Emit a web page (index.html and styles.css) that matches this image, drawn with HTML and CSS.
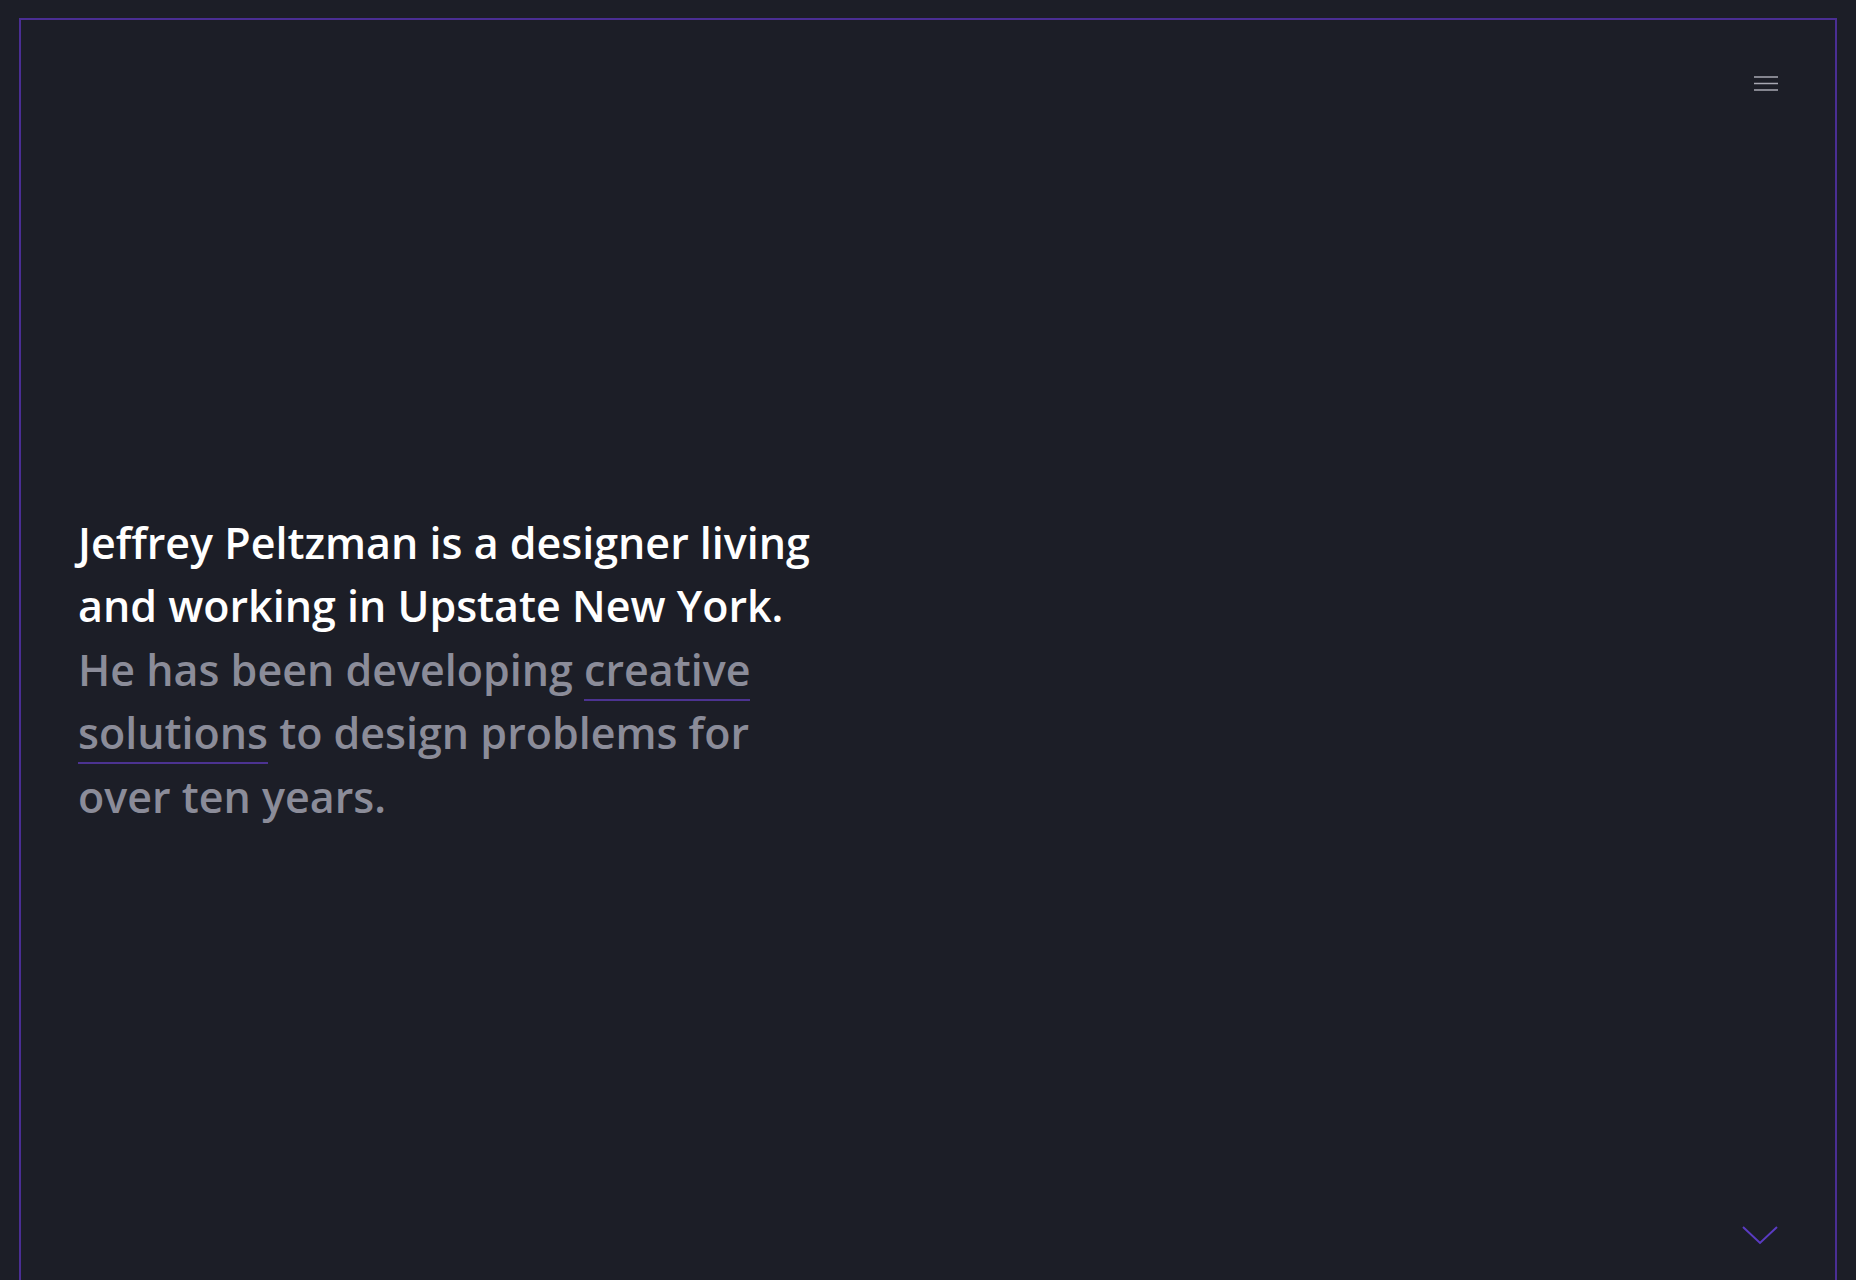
FILE: index.html
```html
<!DOCTYPE html>
<html lang="en">
<head>
  <meta charset="UTF-8">
  <meta name="viewport" content="width=device-width, initial-scale=1.0">
  <title>Jeffrey Peltzman</title>
  <link rel="stylesheet" href="styles.css">
</head>
<body>
  <div class="frame">
    <section class="hero">
      <header class="hero-top">
        <button class="menu-btn" aria-label="Menu">
          <svg width="24" height="15" viewBox="0 0 24 15">
            <path d="M0 1h24M0 7.5h24M0 14h24" stroke="#a7a8b2" stroke-width="1.5" fill="none"/>
          </svg>
        </button>
      </header>

      <div class="intro">
        <p class="lead">Jeffrey Peltzman is a designer living and working in Upstate New York.</p>
        <p class="rest">He has been developing <a href="#work">creative solutions</a> to design problems for over ten years.</p>
      </div>

      <footer class="hero-bottom">
        <a class="scroll-down" href="#work" aria-label="Scroll down">
          <svg width="36" height="19" viewBox="0 0 36 19">
            <path d="M1 1l17 16L35 1" stroke="#5a3bc2" stroke-width="2" fill="none"/>
          </svg>
        </a>
      </footer>
    </section>

    <section class="work" id="work"></section>
  </div>
</body>
</html>
```

FILE: styles.css
```css
*{
  margin: 0;
  padding: 0;
  box-sizing: border-box;
}

body{
  background-color: #1c1e27;
  font-family: "Open Sans", Lato, sans-serif;
}

.frame{
  margin: 18px 19px 0;
  border: 2px solid #4a2e93;
}

.hero{
  height: 1260px;
  padding: 56px 57px 35px;
  display: grid;
  grid-template-rows: auto 1fr auto;
}

.hero-top,
.hero-bottom{
  display: flex;
  justify-content: flex-end;
}

.menu-btn{
  background: none;
  border: none;
  cursor: pointer;
  display: block;
  line-height: 0;
}

.intro{
  align-self: center;
  margin-top: 22px;
  max-width: 750px;
  font-size: 43px;
  font-weight: 600;
  line-height: 63.5px;
}

.lead{
  color: #fff;
}

.rest{
  color: #8b8c99;
}

.rest a{
  color: inherit;
  text-decoration: none;
  border-bottom: 2px solid #4c3391;
}

.scroll-down{
  display: block;
  line-height: 0;
}

.work{
  height: 400px;
}
```
